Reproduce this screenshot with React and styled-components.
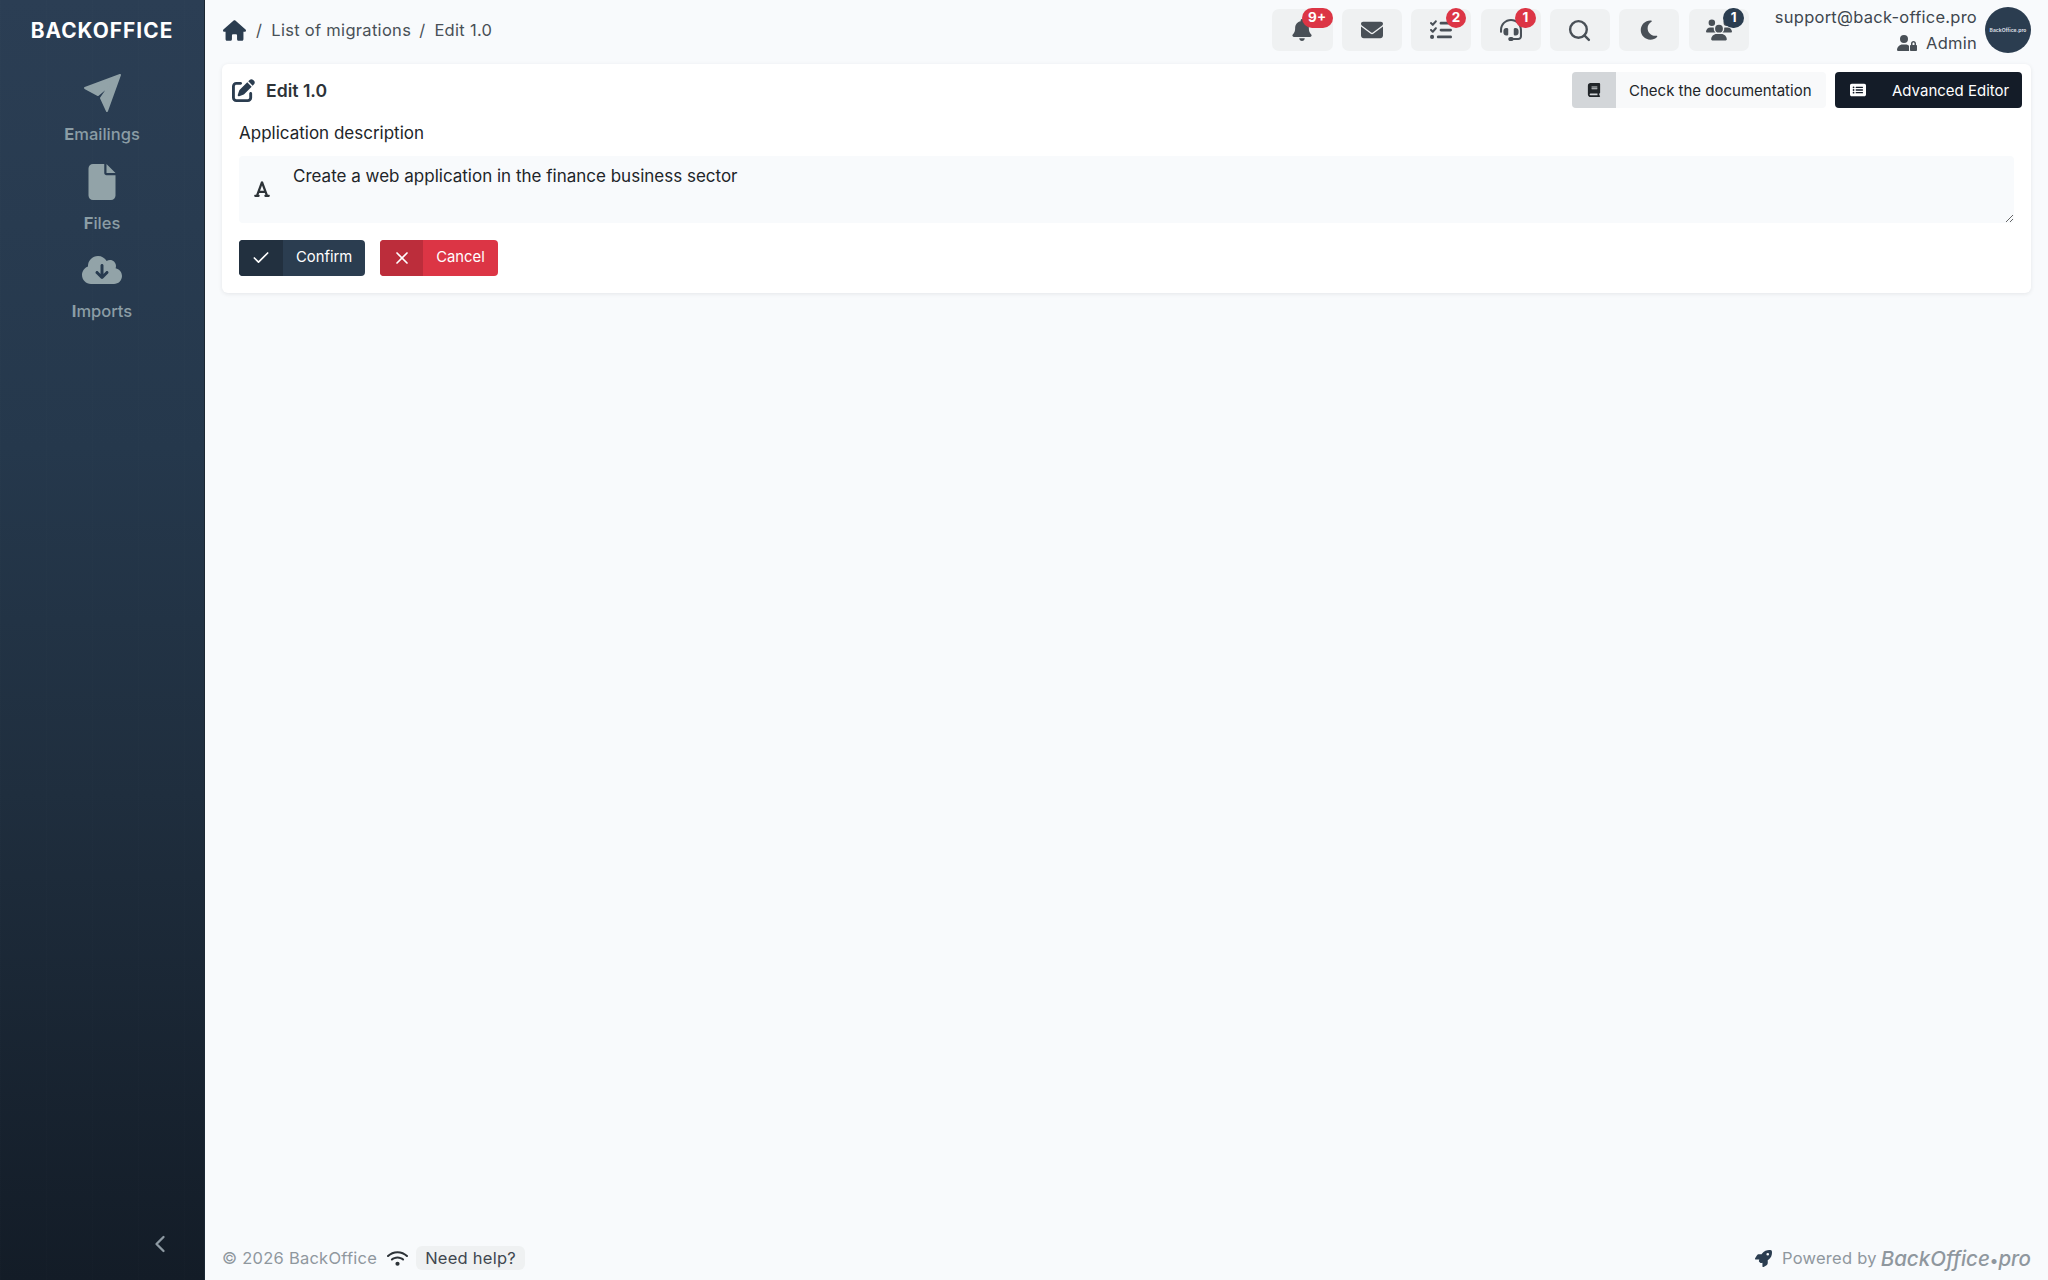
import React from 'react';
import styled, { createGlobalStyle } from 'styled-components';
import {
  FaHouse,
  FaFile,
  FaCloudArrowDown,
  FaPenToSquare,
  FaBook,
  FaRectangleList,
  FaFont,
  FaBell,
  FaEnvelope,
  FaListCheck,
  FaHeadset,
  FaMoon,
  FaUsers,
  FaUserLock,
  FaWifi,
  FaRocket,
} from 'react-icons/fa6';
import { Check, X, ChevronLeft, Search } from 'lucide-react';

// paper plane of the first menu entry
const PlaneIcon = () => (
  <svg width="40" height="40" viewBox="0 0 40 40" fill="currentColor" stroke="currentColor" strokeWidth="2" strokeLinejoin="round">
    <path d="M38 2 L3 15 L16 22 L28 12 L19 25 L25 38 Z" />
  </svg>
);

const navItems = [
  { label: 'Emailings', icon: <PlaneIcon /> },
  { label: 'Files', icon: <FaFile size={36} /> },
  { label: 'Imports', icon: <FaCloudArrowDown size={40} /> },
];

const toolItems = [
  { icon: <FaBell size={22} />, badge: '9+', right: 0, wide: true },
  { icon: <FaEnvelope size={22} /> },
  { icon: <FaListCheck size={22} />, badge: '2', right: 5 },
  { icon: <FaHeadset size={22} />, badge: '1', right: 5 },
  { icon: <Search size={25} strokeWidth={2.3} /> },
  { icon: <FaMoon size={22} /> },
  { icon: <FaUsers size={26} />, badge: '1', right: 5, dark: true },
];

const App = () => (
  <>
    <GlobalStyle />
    <Page>
      <Sidebar>
        <Brand>BACKOFFICE</Brand>
        <Nav>
          {navItems.map((item) => (
            <NavItem key={item.label}>
              <NavIcon>{item.icon}</NavIcon>
              <NavLabel>{item.label}</NavLabel>
            </NavItem>
          ))}
        </Nav>
        <Collapse>
          <ChevronLeft size={28} strokeWidth={2} />
        </Collapse>
      </Sidebar>

      <Main>
        <Header>
          <Breadcrumb>
            <HomeIcon>
              <FaHouse size={23} />
            </HomeIcon>
            <Slash>/</Slash>
            <span>List of migrations</span>
            <Slash $gap>/</Slash>
            <span>Edit 1.0</span>
          </Breadcrumb>
          <Tools>
            {toolItems.map((tool, i) => (
              <ToolButton key={i}>
                {tool.icon}
                {tool.badge && (
                  <Badge $dark={tool.dark} $right={tool.right} $wide={tool.wide}>
                    {tool.badge}
                  </Badge>
                )}
              </ToolButton>
            ))}
          </Tools>
          <UserBlock>
            <UserText>
              <div>support@back-office.pro</div>
              <UserRole>
                <FaUserLock size={20} />
                Admin
              </UserRole>
            </UserText>
            <Avatar>BackOffice.pro</Avatar>
          </UserBlock>
        </Header>

        <Card>
          <CardHeader>
            <CardTitle>
              <FaPenToSquare size={23} />
              Edit 1.0
            </CardTitle>
            <CardActions>
              <DocButton>
                <DocIcon>
                  <FaBook size={14} />
                </DocIcon>
                <span>Check the documentation</span>
              </DocButton>
              <EditorButton>
                <FaRectangleList size={16} />
                <span>Advanced Editor</span>
              </EditorButton>
            </CardActions>
          </CardHeader>

          <FieldLabel>Application description</FieldLabel>
          <InputGroup>
            <InputIcon>
              <FaFont size={18} />
            </InputIcon>
            <TextArea readOnly defaultValue="Create a web application in the finance business sector" />
          </InputGroup>

          <FormActions>
            <ActionButton $bg="#2b3d50" $side="#22303f">
              <ActionIcon $width={44}>
                <Check size={20} strokeWidth={2} />
              </ActionIcon>
              <ActionText>Confirm</ActionText>
            </ActionButton>
            <ActionButton $bg="#dc3545" $side="#bc2d3b">
              <ActionIcon $width={43}>
                <X size={20} strokeWidth={2} />
              </ActionIcon>
              <ActionText>Cancel</ActionText>
            </ActionButton>
          </FormActions>
        </Card>

        <Footer>
          <FooterLeft>
            <span>© 2026 BackOffice</span>
            <WifiIcon>
              <FaWifi size={21} />
            </WifiIcon>
            <HelpChip>Need help?</HelpChip>
          </FooterLeft>
          <FooterRight>
            <RocketIcon>
              <FaRocket size={17} />
            </RocketIcon>
            <span>Powered by</span>
            <Wordmark>
              BackOffice<WordDot>•</WordDot>pro
            </Wordmark>
          </FooterRight>
        </Footer>
      </Main>
    </Page>
  </>
);

export default App;

const GlobalStyle = createGlobalStyle`
  html, body {
    margin: 0;
    padding: 0;
    background: #f8fafc;
  }
  body {
    font-family: Inter, "Liberation Sans", sans-serif;
    color: #212529;
  }
  * {
    box-sizing: border-box;
  }
`;

const Page = styled.div`
  display: flex;
  width: 2048px;
  height: 1280px;
  overflow: hidden;
`;

const Sidebar = styled.aside`
  display: flex;
  flex-direction: column;
  align-items: center;
  flex: 0 0 205px;
  background:
    repeating-linear-gradient(90deg, rgba(255, 255, 255, 0.008) 0 1px, transparent 1px 46px),
    linear-gradient(180deg, #2b3e54 0%, #25384c 35%, #1f2e3e 62%, #131c27 100%);
  border-right: 1px solid #1b2733;
`;

const Brand = styled.div`
  margin-top: 18px;
  font-size: 20.8px;
  line-height: 26px;
  font-weight: 700;
  letter-spacing: 1.05px;
  color: #fff;
`;

const Nav = styled.nav`
  display: flex;
  flex-direction: column;
  align-items: center;
  margin-top: 23px;
`;

const NavItem = styled.div`
  display: flex;
  flex-direction: column;
  align-items: center;
  height: 88.5px;
`;

const NavIcon = styled.div`
  display: flex;
  align-items: center;
  justify-content: center;
  height: 52px;
  color: #92a3a8;
`;

const NavLabel = styled.div`
  margin-top: 3px;
  font-size: 16.5px;
  line-height: 24px;
  font-weight: 500;
  color: #8b9da5;
  &::first-letter {
    font-weight: 700;
  }
`;

const Collapse = styled.div`
  display: flex;
  align-self: flex-end;
  margin: auto 30px 22px 0;
  color: #8e9aa3;
`;

const Main = styled.main`
  display: flex;
  flex-direction: column;
  flex: 1;
  min-width: 0;
  padding: 0 17px;
`;

const Header = styled.header`
  display: flex;
  align-items: center;
  height: 64px;
  padding-bottom: 4px;
`;

const Breadcrumb = styled.div`
  display: flex;
  align-items: center;
  margin-right: auto;
  font-size: 16.5px;
  letter-spacing: 0.3px;
  color: #495057;
`;

const HomeIcon = styled.span`
  display: flex;
  margin: 0 10px 0 1px;
  color: #2b3d50;
`;

const Slash = styled.span`
  margin: 0 9px 0 ${({ $gap }) => ($gap ? '8px' : '0')};
`;

const Tools = styled.div`
  display: flex;
  gap: 9.2px;
`;

const ToolButton = styled.div`
  position: relative;
  display: flex;
  align-items: center;
  justify-content: center;
  width: 60.2px;
  height: 42px;
  border-radius: 7px;
  background: #eff1f2;
  color: #495057;
`;

const Badge = styled.span`
  position: absolute;
  top: -1px;
  right: ${({ $right }) => $right}px;
  width: ${({ $wide }) => ($wide ? '31px' : '20.5px')};
  height: 19.5px;
  border-radius: 10px;
  background: ${({ $dark }) => ($dark ? '#2b3d50' : '#dc3545')};
  color: #fff;
  font-size: 13.5px;
  font-weight: 700;
  line-height: 19.5px;
  text-align: center;
`;

const UserBlock = styled.div`
  display: flex;
  align-items: center;
  margin-left: 26px;
`;

const UserText = styled.div`
  font-size: 16.5px;
  line-height: 26px;
  letter-spacing: 0.25px;
  text-align: right;
  color: #40474f;
`;

const UserRole = styled.div`
  display: flex;
  align-items: center;
  justify-content: flex-end;
  gap: 9px;
  svg {
    color: #495057;
  }
`;

const Avatar = styled.div`
  display: flex;
  align-items: center;
  justify-content: center;
  width: 46px;
  height: 46px;
  margin-left: 8px;
  border-radius: 50%;
  background: #2b3d50;
  color: #d4dbe0;
  font-size: 5px;
  font-weight: 700;
  white-space: nowrap;
`;

const Card = styled.section`
  display: flex;
  flex-direction: column;
  height: 229px;
  padding: 8px 17px 0;
  border-radius: 6px;
  background: #fff;
  box-shadow: 0 1px 4px rgba(33, 37, 41, 0.09);
`;

const CardHeader = styled.div`
  display: flex;
  align-items: center;
  justify-content: space-between;
  height: 36px;
  margin-right: -8px;
`;

const CardTitle = styled.h1`
  display: flex;
  align-items: center;
  gap: 11px;
  margin: 0 0 0 -7px;
  font-size: 17.6px;
  font-weight: 600;
  color: #2d3338;
  svg {
    color: #2b3d50;
  }
`;

const CardActions = styled.div`
  display: flex;
  gap: 9px;
`;

const DocButton = styled.div`
  display: flex;
  align-items: center;
  width: 254px;
  height: 36px;
  border-radius: 4px;
  background: #f8f9fa;
  color: #212529;
  font-size: 15px;
  overflow: hidden;
  span {
    margin-left: 13px;
  }
`;

const DocIcon = styled.div`
  display: flex;
  align-items: center;
  justify-content: center;
  flex: 0 0 44px;
  height: 36px;
  background: #d3d6d9;
  color: #212529;
`;

const EditorButton = styled.div`
  display: flex;
  align-items: center;
  width: 187px;
  height: 36px;
  padding-left: 15px;
  border-radius: 4px;
  background: #141c28;
  color: #fff;
  font-size: 15px;
  span {
    margin-left: 26px;
  }
`;

const FieldLabel = styled.label`
  margin-top: 13px;
  font-size: 17px;
  line-height: 24px;
  color: #212529;
`;

const InputGroup = styled.div`
  display: flex;
  height: 67px;
  margin: 11px 0 0;
  border-radius: 4px;
  background: #f8fafc;
`;

const InputIcon = styled.div`
  display: flex;
  align-items: center;
  justify-content: center;
  flex: 0 0 46px;
  padding-bottom: 2px;
  color: #2d3338;
`;

const TextArea = styled.textarea`
  flex: 1;
  padding: 8px 8px 0;
  border: 0;
  outline: 0;
  background: transparent;
  font: 17px/24px Inter, "Liberation Sans", sans-serif;
  color: #212529;
  resize: vertical;
`;

const FormActions = styled.div`
  display: flex;
  gap: 15px;
  margin-top: 17px;
`;

const ActionButton = styled.div`
  display: flex;
  align-items: center;
  height: 36px;
  border-radius: 4px;
  overflow: hidden;
  background: ${({ $bg }) => $bg};
  color: #fff;
  & > div:first-child {
    background: ${({ $side }) => $side};
  }
`;

const ActionIcon = styled.div`
  display: flex;
  align-items: center;
  justify-content: center;
  width: ${({ $width }) => $width}px;
  height: 36px;
`;

const ActionText = styled.span`
  padding: 0 13px 3px;
  font-size: 14.8px;
  font-weight: 400;
`;

const Footer = styled.footer`
  display: flex;
  align-items: center;
  justify-content: space-between;
  height: 40px;
  margin-top: auto;
  margin-bottom: 2px;
  color: #8f979e;
  font-size: 16.5px;
  letter-spacing: 0.25px;
`;

const FooterLeft = styled.div`
  display: flex;
  align-items: center;
`;

const WifiIcon = styled.span`
  display: flex;
  margin: 0 8px 0 10px;
  color: #2d3338;
`;

const HelpChip = styled.span`
  padding: 2px 9px;
  border-radius: 6px;
  background: #eff1f2;
  color: #40474f;
`;

const FooterRight = styled.div`
  display: flex;
  align-items: center;
`;

const RocketIcon = styled.span`
  display: flex;
  margin-right: 10px;
  color: #2b3d50;
`;

const Wordmark = styled.span`
  margin-left: 4px;
  font-size: 20.5px;
  font-style: italic;
  font-weight: 500;
  letter-spacing: 0;
  color: #8f979e;
`;

const WordDot = styled.span`
  font-style: normal;
  font-size: 16px;
`;
